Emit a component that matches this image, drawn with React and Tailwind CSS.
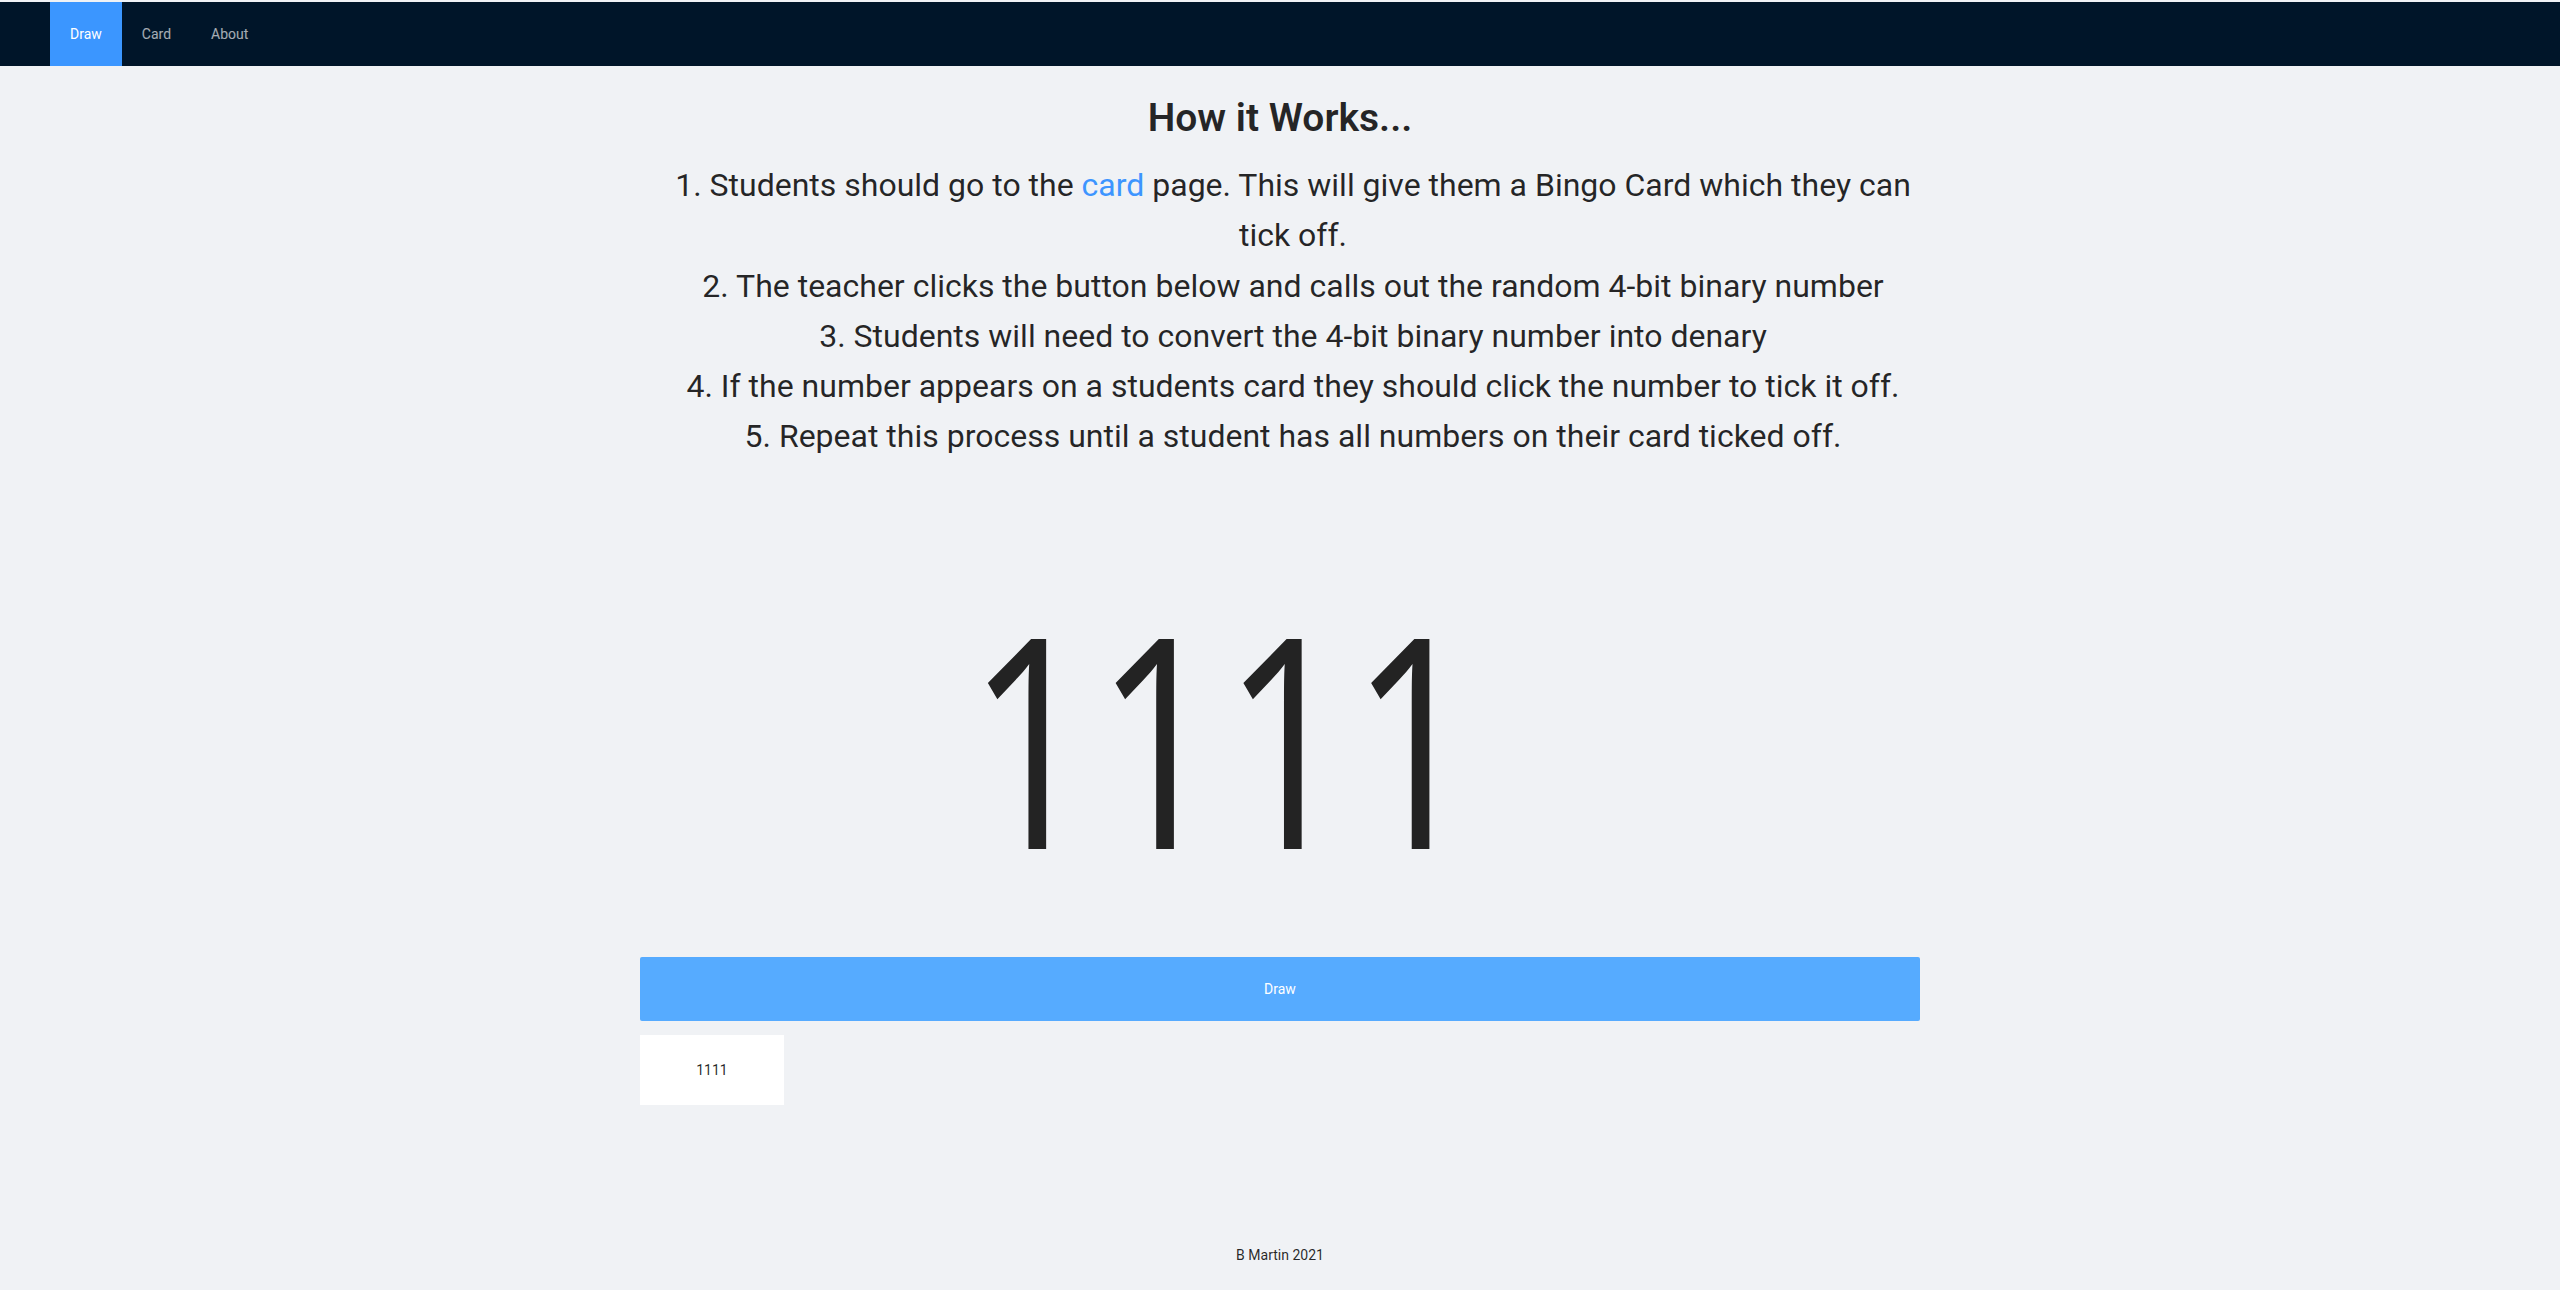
import React from "react";

export default function App() {
  return (
    <div className="min-h-screen flex flex-col bg-[#f0f2f5] pt-[2px] font-['Roboto',sans-serif] text-black/85">
      <header className="h-16 bg-[#001529] flex items-stretch px-[50px]">
        <nav className="flex items-stretch text-sm">
          <a className="px-5 flex items-center bg-[#3b96ff] text-white">Draw</a>
          <a className="px-5 flex items-center text-white/65">Card</a>
          <a className="px-5 flex items-center text-white/65">About</a>
        </nav>
      </header>

      <main className="flex-1 flex flex-col items-center">
        <div className="w-[1280px] flex flex-col items-center text-center">
          <h2 className="mt-[26px] text-[39px] leading-[52px] font-semibold">How it Works...</h2>
          <div className="mt-4 w-full pl-[26px] text-[32px] leading-[1.5715]">
            <p>
              1. Students should go to the <a className="text-[#3d95ff]">card</a> page. This will give them a Bingo Card which they can tick off.
            </p>
            <p>2. The teacher clicks the button below and calls out the random 4-bit binary number</p>
            <p>3. Students will need to convert the 4-bit binary number into denary</p>
            <p>4. If the number appears on a students card they should click the number to tick it off.</p>
            <p>5. Repeat this process until a student has all numbers on their card ticked off.</p>
          </div>

          <div className="mt-[126px] h-[304px] w-full flex items-start justify-center pr-[114px]">
            <span className="inline-block scale-x-[0.76] font-['Open_Sans',sans-serif] text-[294px] leading-none text-[#232323]">
              1111
            </span>
          </div>

          <button className="mt-[65px] w-full h-16 bg-[#56abff] text-white text-sm rounded-[2px]">Draw</button>

          <div className="mt-[14px] self-start w-[144px] h-[70px] bg-white flex items-center justify-center text-sm">
            1111
          </div>
        </div>
      </main>

      <footer className="py-6 text-center text-sm leading-[22px]">B Martin 2021</footer>
    </div>
  );
}
